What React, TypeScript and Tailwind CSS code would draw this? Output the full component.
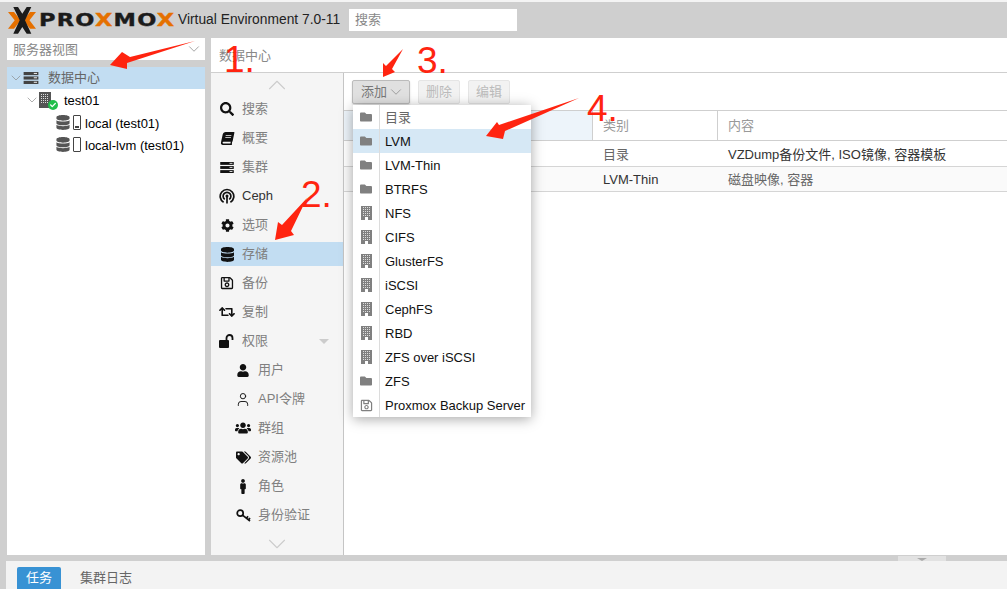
import { ChevronDown, ChevronUp, User } from "lucide-react"
import {
  FaBook,
  FaCog,
  FaDatabase,
  FaFolder,
  FaMale,
  FaRegSave,
  FaRetweet,
  FaSearch,
  FaTags,
  FaUser,
  FaUsers,
  FaCheck,
} from "react-icons/fa"
import type { ReactNode } from "react"

const font = "font-['Liberation_Sans','Noto_Sans_CJK_SC',sans-serif]"

const ServerIcon = ({ className = "" }: { className?: string }) => (
  <svg viewBox="0 0 16 13" className={className} fill="currentColor">
    <rect x="0" y="0" width="16" height="3.4" />
    <rect x="0" y="4.8" width="16" height="3.4" />
    <rect x="0" y="9.6" width="16" height="3.4" />
    <rect x="11" y="1" width="3.5" height="1" fill="#fff" />
    <rect x="11" y="5.8" width="3.5" height="1" fill="#fff" />
    <rect x="11" y="10.6" width="3.5" height="1" fill="#fff" />
  </svg>
)

const CephIcon = () => (
  <svg viewBox="0 0 16 16" className="h-[16px] w-[16px]" fill="none" stroke="#111" strokeWidth="1.7">
    <path d="M4.6 14.2a6.8 6.8 0 1 1 6.8 0" />
    <path d="M5.8 11.4a3.9 3.9 0 1 1 4.4 0" />
    <circle cx="8" cy="8" r="1.5" fill="#111" stroke="none" />
    <path d="M8 9v6.5" />
  </svg>
)

const BuildingIcon = () => (
  <svg viewBox="0 0 11 14" className="h-[14px] w-[11px]">
    <rect width="11" height="14" fill="#808080" />
    {[2, 4, 6, 8].map(x =>
      [1, 3, 5, 7, 9].map(y => <rect key={`${x}-${y}`} x={x} y={y} width="1" height="1" fill="#ddd" />),
    )}
    <rect x="4" y="11" width="3" height="3" fill="#fff" />
  </svg>
)

const NodeIcon = () => (
  <svg viewBox="0 0 12 16" className="h-[16px] w-[12px]">
    <rect width="12" height="16" fill="#555" />
    {[2, 4, 6, 8].map(x =>
      [2, 4, 6, 8, 10].map(y => <rect key={`${x}-${y}`} x={x} y={y} width="1" height="1" fill="#ddd" />),
    )}
  </svg>
)

const UnlockIcon = () => (
  <svg viewBox="0 0 16 14" className="h-[14px] w-[16px]">
    <rect x="0" y="6" width="10" height="8" rx="1" fill="#111" />
    <path d="M7.5 6.5V4a3 3 0 0 1 6 0v2" fill="none" stroke="#111" strokeWidth="1.8" />
  </svg>
)

const KeyIcon = () => (
  <svg viewBox="0 0 15 13" className="h-[13px] w-[15px]" fill="none" stroke="#111" strokeWidth="1.7">
    <circle cx="4.2" cy="4.2" r="3" />
    <path d="M6.5 6.2 14 12M10.5 9.2l1.5-2M12.6 10.8l1.4-1.8" />
  </svg>
)

const StorageIcon = ({ used }: { used?: boolean }) => (
  <div className="flex items-center gap-[3px]">
    <FaDatabase className="h-[15px] w-[14px] text-[#555]" />
    <div className="flex h-[15px] w-[8px] items-end justify-center rounded-[1px] border border-[#444] bg-white pb-[1px]">
      {used && <div className="h-[2px] w-[4px] bg-[#444]" />}
    </div>
  </div>
)

const menu: { label: string; icon: ReactNode; sub?: boolean; active?: boolean; caret?: boolean }[] = [
  { label: "搜索", icon: <FaSearch className="h-[14px] w-[14px]" /> },
  { label: "概要", icon: <FaBook className="h-[13px] w-[13px] -skew-x-12" /> },
  { label: "集群", icon: <ServerIcon className="h-[11px] w-[14px]" /> },
  { label: "Ceph", icon: <CephIcon /> },
  { label: "选项", icon: <FaCog className="h-[13px] w-[13px]" /> },
  { label: "存储", icon: <FaDatabase className="h-[15px] w-[13px]" />, active: true },
  { label: "备份", icon: <FaRegSave className="h-[14px] w-[14px]" /> },
  { label: "复制", icon: <FaRetweet className="h-[16px] w-[17px]" /> },
  { label: "权限", icon: <UnlockIcon />, caret: true },
  { label: "用户", icon: <FaUser className="h-[13px] w-[12px]" />, sub: true },
  { label: "API令牌", icon: <User className="h-[17px] w-[17px]" strokeWidth={1.4} />, sub: true },
  { label: "群组", icon: <FaUsers className="h-[16px] w-[16px]" />, sub: true },
  { label: "资源池", icon: <FaTags className="h-[13px] w-[15px]" />, sub: true },
  { label: "角色", icon: <FaMale className="h-[15px] w-[12px]" />, sub: true },
  { label: "身份验证", icon: <KeyIcon />, sub: true },
]

const folder = <FaFolder className="h-[12px] w-[14px] text-[#808080]" />
const building = <BuildingIcon />

const addItems: { label: string; icon: ReactNode; active?: boolean; cjk?: boolean }[] = [
  { label: "目录", icon: folder, cjk: true },
  { label: "LVM", icon: folder, active: true },
  { label: "LVM-Thin", icon: folder },
  { label: "BTRFS", icon: folder },
  { label: "NFS", icon: building },
  { label: "CIFS", icon: building },
  { label: "GlusterFS", icon: building },
  { label: "iSCSI", icon: building },
  { label: "CephFS", icon: building },
  { label: "RBD", icon: building },
  { label: "ZFS over iSCSI", icon: building },
  { label: "ZFS", icon: folder },
  { label: "Proxmox Backup Server", icon: <FaRegSave className="h-[13px] w-[13px] text-[#808080]" /> },
]

const Logo = () => (
  <div className="flex w-[176px] items-center">
    <svg viewBox="0 0 28 27" className="ml-[8px] h-[27px] w-[28px] shrink-0">
      <path d="M0 5h6l6.7 8.3L6 21.7H0l6.7-8.4z" fill="#e57000" />
      <path d="M28 5h-6l-6.5 8.3 6.5 8.4h6l-6.5-8.4z" fill="#e57000" />
      <path d="M5.3 0H10l4.3 6.7L18.7 0h4.6L17 13.3l6.3 13.4h-4.6L14.3 20 10 26.7H5.3l6.4-13.4z" fill="#1b1b1b" />
    </svg>
    <div className="ml-[3px] origin-left scale-x-[1.25] font-['DejaVu_Sans',sans-serif] text-[18px] leading-none font-bold tracking-[1px] whitespace-nowrap text-[#1b1b1b] [-webkit-text-stroke:0.4px_currentColor]">
      PRO<span className="text-[#e57000]">X</span>MO<span className="text-[#e57000]">X</span>
    </div>
  </div>
)

const Arrow = ({ points }: { points: string }) => <polygon points={points} fill="#ff2410" />

const Mark = ({ children, className }: { children: string; className: string }) => (
  <div className={`absolute font-['Liberation_Sans',sans-serif] text-[37px] leading-none text-[#ff2410] ${className}`}>
    {children}
  </div>
)

export default function App() {
  return (
    <div className={`relative flex h-[589px] w-[1007px] flex-col overflow-hidden bg-[#cfcfcf] text-[13px] ${font}`}>
      <div className="h-[2px] bg-[#f4f4f4]" />

      {/* header */}
      <div className="flex h-[36px] items-center">
        <Logo />
        <div className="ml-[2px] w-[171px] text-[13.8px] whitespace-nowrap text-[#222]">Virtual Environment 7.0-11</div>
        <div className="flex h-[22px] w-[168px] items-center bg-white pl-[6px] text-[#888]">搜索</div>
      </div>

      {/* main */}
      <div className="flex h-[517px] pl-[7px]">
        <div className="mr-[6px] flex w-[198px] flex-col">
          <div className="flex h-[22px] items-center justify-between bg-white pr-[2px] pl-[6px] text-[#888]">
            <span className="pt-[2px]">服务器视图</span>
            <ChevronDown className="h-[18px] w-[18px] text-[#888]" strokeWidth={1} />
          </div>
          <div className="mt-[7px] flex-1 bg-white">
            <div className="flex h-[22px] items-center bg-[#c2ddf2] pl-[1px] text-[#666]">
              <ChevronDown className="h-[16px] w-[16px] text-[#888]" strokeWidth={1} />
              <ServerIcon className="ml-[-1px] h-[12px] w-[16px] text-[#444]" />
              <span className="ml-[9px]">数据中心</span>
            </div>
            <div className="flex h-[22px] items-center pl-[17px] text-black">
              <ChevronDown className="h-[16px] w-[16px] text-[#888]" strokeWidth={1} />
              <div className="relative ml-[-1px] h-[16px] w-[12px]">
                <NodeIcon />
                <div className="absolute -right-[7px] -bottom-[2px] flex h-[10px] w-[10px] items-center justify-center rounded-full bg-[#21bf4b]">
                  <FaCheck className="h-[6px] w-[6px] text-white" />
                </div>
              </div>
              <span className="ml-[13px] pt-[2px]">test01</span>
            </div>
            {[
              { name: "local (test01)", used: true },
              { name: "local-lvm (test01)", used: false },
            ].map(s => (
              <div key={s.name} className="flex h-[22px] items-center pl-[49px] text-black">
                <StorageIcon used={s.used} />
                <span className="ml-[4px] pt-[4px]">{s.name}</span>
              </div>
            ))}
          </div>
        </div>

        <div className="flex flex-1 flex-col bg-white">
          <div className="flex h-[35px] items-center border-b border-[#cfcfcf] pl-[8px] text-[#888]">
            <span className="pt-[2px]">数据中心</span>
          </div>
          <div className="flex flex-1">
            <div className="flex w-[133px] flex-col border-r border-[#c5c5c5] bg-[#f5f5f5]">
              <div className="flex h-[24px] shrink-0 items-center justify-center">
                <ChevronUp className="h-[30px] w-[30px] shrink-0 text-[#ccc]" strokeWidth={0.9} />
              </div>
              <div className="flex flex-col gap-[5px]">
                {menu.map(m => (
                  <div
                    key={m.label}
                    className={`flex h-[24px] items-center ${m.sub ? "pl-[24px]" : "pl-[8px]"} ${m.active ? "bg-[#c2ddf2]" : ""}`}
                  >
                    <div className="flex w-[16px] justify-center text-[#111]">{m.icon}</div>
                    <span className={`ml-[7px] ${m.label === "Ceph" ? "text-[#333]" : "text-[#808080]"}`}>{m.label}</span>
                    {m.caret && (
                      <div className="mr-[14px] ml-auto h-0 w-0 border-x-[5px] border-t-[5px] border-x-transparent border-t-[#ccc]" />
                    )}
                  </div>
                ))}
              </div>
              <div className="mt-auto flex h-[22px] items-center justify-center">
                <ChevronDown className="h-[30px] w-[30px] shrink-0 text-[#ccc]" strokeWidth={0.9} />
              </div>
            </div>

            <div className="relative flex-1">
              <div className="flex h-[37px] items-center gap-[8px] pl-[8px]">
                <div className="flex h-[24px] w-[58px] items-center justify-center rounded-[2px] border border-[#bbb] bg-[#e0e0e0] pl-[4px] text-[#777] shadow-[0_1px_2px_rgba(0,0,0,0.15)]">
                  添加
                  <ChevronDown className="h-[18px] w-[18px] shrink-0 text-[#888]" strokeWidth={1} />
                </div>
                <div className="flex h-[24px] w-[42px] items-center justify-center rounded-[2px] border border-[#e5e5e5] bg-[#f2f2f2] text-[#bbb]">
                  删除
                </div>
                <div className="flex h-[24px] w-[42px] items-center justify-center rounded-[2px] border border-[#e5e5e5] bg-[#f2f2f2] text-[#bbb]">
                  编辑
                </div>
              </div>
              <div className="grid grid-cols-[249px_125px_1fr] border-y border-[#cfcfcf] text-[#999]">
                <div className="h-[29px] border-r border-[#cfcfcf] bg-[#edf4fa]" />
                <div className="flex h-[29px] items-center border-r border-[#cfcfcf] pl-[10px]">类别</div>
                <div className="flex h-[29px] items-center pl-[10px]">内容</div>
              </div>
              <div className="grid h-[26px] grid-cols-[249px_125px_1fr] items-center border-b border-[#d5d5d5] pt-[2px] text-[#333]">
                <div />
                <div className="pl-[10px] text-[#666]">目录</div>
                <div className="pl-[10px]">VZDump备份文件, ISO镜像, 容器模板</div>
              </div>
              <div className="grid h-[25px] grid-cols-[249px_125px_1fr] items-center border-b border-[#d5d5d5] bg-[#fafafa] pt-[2px] text-[#333]">
                <div />
                <div className="pl-[10px]">LVM-Thin</div>
                <div className="pl-[10px] text-[#666]">磁盘映像, 容器</div>
              </div>

              {/* add menu */}
              <div className="absolute top-[32px] left-[9px] w-[178px] bg-white shadow-[0_2px_12px_rgba(0,0,0,0.35)]">
                {addItems.map(item => (
                  <div key={item.label} className={`flex h-[24px] items-center ${item.active ? "bg-[#d6e8f5]" : ""}`}>
                    <div className="flex h-full w-[27px] items-center justify-center border-r border-[#dcdcdc]">
                      {item.icon}
                    </div>
                    <span className={`ml-[5px] pt-[2px] whitespace-nowrap ${item.cjk ? "text-[#666]" : "text-[#111]"}`}>
                      {item.label}
                    </span>
                  </div>
                ))}
              </div>
            </div>
          </div>
        </div>
      </div>

      {/* bottom panel */}
      <div className="mt-[6px] ml-[6px] flex flex-1 items-end bg-[#f3f3f3] pl-[11px]">
        <div className="flex h-[22px] w-[44px] items-center justify-center rounded-t-[2px] bg-[#3892d4] text-white">任务</div>
        <div className="ml-[19px] flex h-[22px] items-center text-[#666]">集群日志</div>
      </div>
      <div className="absolute top-[556px] left-[898px] flex h-[5px] w-[48px] items-end justify-center bg-[#e2e2e2]">
        <div className="h-0 w-0 border-x-[5px] border-t-[3px] border-x-transparent border-t-[#aaa]" />
      </div>

      {/* annotations */}
      <svg className="pointer-events-none absolute inset-0 h-[589px] w-[1007px]" viewBox="0 0 1007 589">
        <Arrow points="195,41 130,57 122,52 110,65 127,69 127,63" />
        <Arrow points="307,198 291,231 294,235 275,240 278,222 282,225" />
        <Arrow points="403,49 392,69 395,72 383,77 383,63 386,66" />
        <Arrow points="579,98 505,131 503,139 486,136 497,122 499,125" />
      </svg>
      <Mark className="top-[41px] left-[224px]">1.</Mark>
      <Mark className="top-[176px] left-[301px]">2.</Mark>
      <Mark className="top-[42px] left-[417px]">3.</Mark>
      <Mark className="top-[90px] left-[587px]">4.</Mark>
    </div>
  )
}
